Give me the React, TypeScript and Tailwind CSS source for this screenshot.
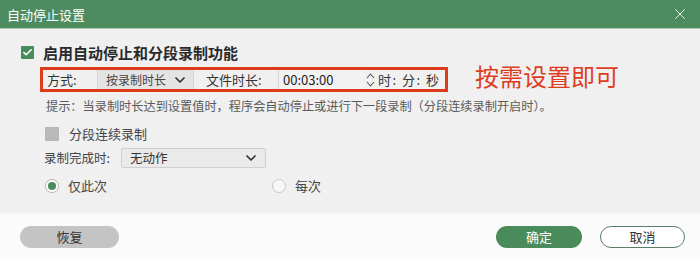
import { ChevronDown, Check, X } from "lucide-react";

const FONT = "font-['Noto_Sans_CJK_SC','Noto_Sans',sans-serif]";

export default function App() {
  return (
    <div className={`relative w-[700px] h-[259px] flex flex-col bg-[#f0f0f0] text-[#333] ${FONT}`}>
      {/* title bar */}
      <div className="h-[29px] flex items-center justify-between bg-[#4d8c5e] border-b border-[#a8cbb1] pl-[7px] pr-[11px]">
        <span className="text-[13px] text-white leading-none">自动停止设置</span>
        <X className="w-[18px] h-[18px] text-[#e6f0e8]" strokeWidth={1.3} />
      </div>

      {/* body */}
      <div className="flex-1 flex flex-col pl-[21px] pt-[13px]">
        <div className="h-[20px] flex items-center gap-[9px]">
          <span className="w-[13px] h-[13px] bg-[#4a8b5b] flex items-center justify-center rounded-[1px]">
            <Check className="w-[11px] h-[11px] text-white" strokeWidth={3.5} />
          </span>
          <span className="text-[15px] font-bold text-[#2a2a2a] leading-none">启用自动停止和分段录制功能</span>
        </div>

        <div className="mt-[5px] ml-[19px] w-[408px] h-[25px] border-[3px] border-[#dc3b1c] flex items-center text-[13px] text-[#333]">
          <span className="ml-[4px] w-[50px]">方式:</span>
          <div className="w-[97px] h-full bg-[#e4e4e4] border-l border-r border-[#d6d6d6] flex items-center justify-between pl-[8px] pr-[5px]">
            <span className="text-[12px] text-[#444]">按录制时长</span>
            <ChevronDown className="w-[16px] h-[16px] text-[#333]" strokeWidth={2.6} />
          </div>
          <span className="ml-[12px] w-[72px]">文件时长:</span>
          <div className="w-[86px] h-full bg-[#f2f2f2] border-l border-[#d6d6d6] flex items-center pl-[4px] text-[13px] text-[#222]">
            00:03:00
          </div>
          <div className="w-[12px] h-full flex flex-col items-center justify-center text-[#555] leading-none">
            <svg width="9" height="16" viewBox="0 0 9 16" fill="none" stroke="#555" strokeWidth="1.1">
              <path d="M1 6 L4.5 2 L8 6" />
              <path d="M1 10 L4.5 14 L8 10" />
            </svg>
          </div>
          <span className="ml-[2px] text-[13px] text-[#333] tracking-[1.5px]">时: 分: 秒</span>
        </div>

        <div className="mt-[6px] ml-[25px] text-[12.2px] leading-[16px] text-[#5a5a5a]">
          提示：当录制时长达到设置值时，程序会自动停止或进行下一段录制（分段连续录制开启时）。
        </div>

        <div className="mt-[12px] ml-[24px] h-[16px] flex items-center gap-[10px]">
          <span className="w-[14px] h-[14px] bg-[#b9b9b9]" />
          <span className="text-[13px] text-[#444]">分段连续录制</span>
        </div>

        <div className="mt-[6px] ml-[23px] h-[20px] flex items-center">
          <span className="w-[77px] text-[12.5px] text-[#444]">录制完成时:</span>
          <div className="w-[145px] h-[20px] bg-[#eaeaea] border border-[#cfcfcf] rounded-[2px] flex items-center justify-between pl-[8px] pr-[6px]">
            <span className="text-[12.5px] text-[#333]">无动作</span>
            <ChevronDown className="w-[16px] h-[16px] text-[#333]" strokeWidth={2.6} />
          </div>
        </div>

        <div className="mt-[10px] ml-[24px] h-[16px] flex items-center">
          <div className="w-[227px] flex items-center gap-[9px]">
            <span className="w-[14px] h-[14px] rounded-full border border-[#b5b5b5] bg-white flex items-center justify-center">
              <span className="w-[8px] h-[8px] rounded-full bg-[#4a8b5b]" />
            </span>
            <span className="text-[13px] text-[#444]">仅此次</span>
          </div>
          <div className="flex items-center gap-[9px]">
            <span className="w-[14px] h-[14px] rounded-full border border-[#c8c8c8] bg-[#f7f7f7]" />
            <span className="text-[13px] text-[#444]">每次</span>
          </div>
        </div>
      </div>

      {/* footer */}
      <div className="h-[46px] bg-[#fbfbfb] border-t border-[#f6f6f6] flex items-center pl-[20px] pr-[15px]">
        <button className="w-[99px] h-[22px] rounded-full bg-[#c4c4c4] text-[13px] text-[#333]">恢复</button>
        <div className="flex-1" />
        <button className="w-[86px] h-[22px] rounded-full bg-[#4a8b5b] text-[13px] text-white">确定</button>
        <button className="ml-[18px] w-[85px] h-[22px] rounded-full border-[1.5px] border-[#5a7d66] bg-white text-[13px] text-[#333]">取消</button>
      </div>

      {/* annotation over the screenshot */}
      <span className="absolute left-[475px] top-[61px] text-[24px] leading-[30px] text-[#e03c1f]">按需设置即可</span>
    </div>
  );
}
